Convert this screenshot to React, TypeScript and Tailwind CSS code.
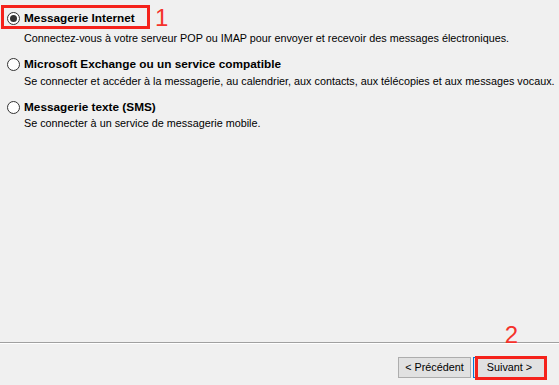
const options = [
  {
    title: 'Messagerie Internet',
    text: 'Connectez-vous à votre serveur POP ou IMAP pour envoyer et recevoir des messages électroniques.',
    checked: true,
    descGap: 'mt-[4px]',
  },
  {
    title: 'Microsoft Exchange ou un service compatible',
    text: 'Se connecter et accéder à la messagerie, au calendrier, aux contacts, aux télécopies et aux messages vocaux.',
    checked: false,
    descGap: 'mt-[1px]',
  },
  {
    title: 'Messagerie texte (SMS)',
    text: 'Se connecter à un service de messagerie mobile.',
    checked: false,
    descGap: 'mt-0',
  },
];

function Radio({ checked }: { checked: boolean }) {
  return (
    <span className="flex h-[13px] w-[13px] shrink-0 items-center justify-center rounded-full border border-[#333333] bg-white">
      {checked && <span className="h-[7px] w-[7px] rounded-full bg-[#333333]" />}
    </span>
  );
}

const redFont = { fontFamily: '"Liberation Sans", Arial, sans-serif' };

export default function App() {
  return (
    <div
      className="flex h-[385px] w-[559px] flex-col overflow-hidden bg-[#f0f0f0] text-[10.8px] text-black"
      style={{ fontFamily: '"Liberation Sans", Arial, sans-serif' }}
    >
      <div className="flex flex-1 flex-col gap-[10px] pl-[7px] pt-[10px]">
        {options.map((o, i) => (
          <div key={o.title} className="relative flex flex-col">
            <label className="flex h-[16px] items-center gap-[4px] whitespace-nowrap">
              <Radio checked={o.checked} />
              <span className="text-[11.8px] font-bold leading-[16px]">{o.title}</span>
            </label>
            <p className={`${o.descGap} whitespace-nowrap pl-[17px] leading-[16px]`}>{o.text}</p>
            {i === 0 && (
              <>
                <span className="pointer-events-none absolute left-[-6px] top-[-5px] h-[24px] w-[149px] border-[3px] border-[#f5221b]" />
                <span className="absolute left-[148px] top-[-4px] text-[24px] leading-[24px] text-[#f5322b]" style={redFont}>
                  1
                </span>
              </>
            )}
          </div>
        ))}
      </div>

      <div className="relative">
        <span className="absolute right-[41px] top-[-19px] text-[24px] leading-[24px] text-[#f5322b]" style={redFont}>
          2
        </span>
        <div className="h-px bg-[#a0a0a0]" />
        <div className="h-px bg-white" />
      </div>

      <div className="flex h-[41px] items-start justify-end gap-[2px] pr-[13px] pt-[13px]">
        <button className="h-[21px] w-[73px] border border-[#adadad] bg-[#e1e1e1] leading-[19px]">
          &lt; Précédent
        </button>
        <span className="relative flex">
          <button className="h-[21px] w-[73px] border border-[#0078d7] bg-[#e1e1e1] leading-[19px]">
            Suivant &gt;
          </button>
          <span className="pointer-events-none absolute left-[2px] top-[-1px] h-[24px] w-[72px] border-[3px] border-[#f5221b]" />
        </span>
      </div>
    </div>
  );
}
